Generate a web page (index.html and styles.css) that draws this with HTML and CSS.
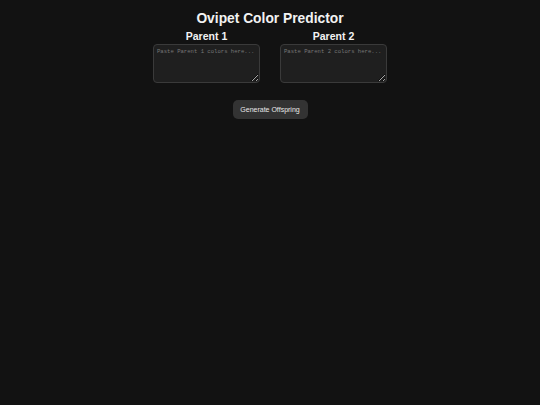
FILE: index.html
```html
<!DOCTYPE html>
<html>
<head>
<meta charset="utf-8">
<link rel="stylesheet" href="styles.css">
</head>
<body>
<div class="page">
  <h1 class="title">Ovipet Color Predictor</h1>
  <div class="parents">
    <div class="parent">
      <h2 class="label">Parent 1</h2>
      <textarea class="input" placeholder="Paste Parent 1 colors here..."></textarea>
    </div>
    <div class="parent">
      <h2 class="label">Parent 2</h2>
      <textarea class="input" placeholder="Paste Parent 2 colors here..."></textarea>
    </div>
  </div>
  <button class="btn">Generate Offspring</button>
</div>
</body>
</html>
```
FILE: styles.css
```css
html, body {
  margin: 0;
  padding: 0;
  background: #121212;
  height: 100%;
}
body {
  font-family: "Liberation Sans", Arial, sans-serif;
  color: #f2f2f2;
}
.page {
  display: flex;
  flex-direction: column;
  align-items: center;
  padding-top: 10px;
}
.title {
  margin: 0;
  font-size: 13.8px;
  font-weight: bold;
  line-height: 17px;
}
.parents {
  display: flex;
  gap: 20px;
  margin-top: 3px;
}
.parent {
  display: flex;
  flex-direction: column;
  align-items: center;
}
.label {
  margin: 0 0 2px 0;
  font-size: 10.5px;
  line-height: 12px;
  font-weight: bold;
}
.input {
  box-sizing: border-box;
  width: 107px;
  height: 39px;
  background: #1f1f1f;
  border: 1px solid #3a3a3a;
  border-radius: 4px;
  color: #ddd;
  font-family: "Liberation Mono", monospace;
  font-size: 5.6px;
  padding: 3px 1px 3px 3px;
  overflow: hidden;
  resize: vertical;
  outline: none;
}
.input::placeholder {
  color: #777;
}
.btn {
  margin-top: 17px;
  width: 75px;
  height: 19px;
  padding: 0;
  background: #333333;
  color: #e8e8e8;
  border: none;
  border-radius: 5px;
  font-family: "Liberation Sans", Arial, sans-serif;
  font-size: 7px;
}
```
